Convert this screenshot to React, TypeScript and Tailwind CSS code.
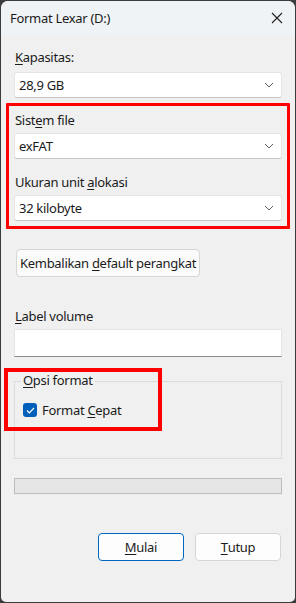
import React from 'react';

function Chevron() {
  return (
    <svg width="10" height="6" viewBox="0 0 10 6" fill="none" className="text-[#5f5f5f]">
      <path d="M1 1l4 4 4-4" stroke="currentColor" strokeWidth="1" />
    </svg>
  );
}

function Combo({ value }: { value: string }) {
  return (
    <div className="flex h-[26px] items-center justify-between rounded-[3px] border border-[#e5e5e5] border-b-[#c4c4c4] bg-white pl-[4px] pr-[7px]">
      <span>{value}</span>
      <Chevron />
    </div>
  );
}

export default function App() {
  return (
    <div
      className="h-[603px] w-[296px] bg-[#3c3c3c] p-[1px] text-[13px] leading-none tracking-[-0.3px] text-[#1b1b1b]"
      style={{ fontFamily: '"Noto Sans", "Open Sans", sans-serif' }}
    >
      <div className="flex h-full flex-col overflow-hidden rounded-t-[7px] rounded-b-[5px] bg-[#f0f0f0]">
        {/* title bar */}
        <div className="flex h-[34px] shrink-0 items-center justify-between bg-[#eff3f6] pl-[9px] pr-[12px]">
          <span className="text-[13px]">Format Lexar (D:)</span>
          <svg width="12" height="12" viewBox="0 0 12 12" className="text-[#202020]">
            <path d="M1 1l10 10M11 1L1 11" stroke="currentColor" strokeWidth="1.1" />
          </svg>
        </div>

        <div className="flex flex-col px-[13px] pt-[16px]">
          <div className="pl-[1px]">
            <span className="underline underline-offset-2">K</span>apasitas:
          </div>
          <div className="mt-[8px]">
            <Combo value="28,9 GB" />
          </div>

          <div className="-mx-[8px] mt-[5px] rounded-[1px] border-[3px] border-[#ff0000] px-[5px] pb-[5px] pt-[8px]">
            <div className="pl-[1px]">
              Sist<span className="underline underline-offset-2">e</span>m file
            </div>
            <div className="mt-[6px]">
              <Combo value="exFAT" />
            </div>
            <div className="mt-[17px] pl-[1px]">
              Ukuran unit <span className="underline underline-offset-2">a</span>lokasi
            </div>
            <div className="mt-[6px]">
              <Combo value="32 kilobyte" />
            </div>
          </div>

          <div className="mt-[20px] flex">
            <button className="ml-[2px] flex h-[28px] items-center rounded-[4px] border border-[#d6d6d6] bg-[#fbfbfb] px-[3px]">
              Kembalikan&nbsp;<span className="underline underline-offset-2">d</span>efault perangkat
            </button>
          </div>

          <div className="mt-[33px] pl-[1px]">
            <span className="underline underline-offset-2">L</span>abel volume
          </div>
          <div className="mt-[6px] h-[28px] border border-[#e5e5e5] border-b-[#8a8a8a] bg-white" />

          <div className="relative mt-[24px] h-[78px] border border-[#dcdcdc]">
            <span className="absolute -top-[8px] left-[6px] bg-[#f0f0f0] px-[2px]">
              <span className="underline underline-offset-2">O</span>psi format
            </span>
            <div className="absolute left-[8px] top-[21px] flex items-center gap-[5px]">
              <span className="flex h-[14px] w-[14px] items-center justify-center rounded-[3px] bg-[#005fb8]">
                <svg width="9" height="7" viewBox="0 0 9 7" fill="none">
                  <path d="M1 3.5l2.3 2.3L8 1" stroke="white" strokeWidth="1.2" />
                </svg>
              </span>
              <span>
                Format <span className="underline underline-offset-2">C</span>epat
              </span>
            </div>
            <div className="pointer-events-none absolute -left-[11px] -top-[14px] h-[63px] w-[158px] border-[4px] border-[#ff0000]" />
          </div>
        </div>

        <div className="mx-[13px] mt-[19px] h-[16px] border border-[#bcbcbc] bg-[#e6e6e6]" />

        <div className="mt-[39px] flex justify-end gap-[11px] pr-[14px]">
          <button className="flex h-[28px] w-[86px] items-center justify-center rounded-[4px] border border-[#0067c0] bg-[#fdfdfd]">
            <span className="underline underline-offset-2">M</span>ulai
          </button>
          <button className="flex h-[28px] w-[86px] items-center justify-center rounded-[4px] border border-[#d6d6d6] bg-[#fdfdfd]">
            <span className="underline underline-offset-2">T</span>utup
          </button>
        </div>
      </div>
    </div>
  );
}
